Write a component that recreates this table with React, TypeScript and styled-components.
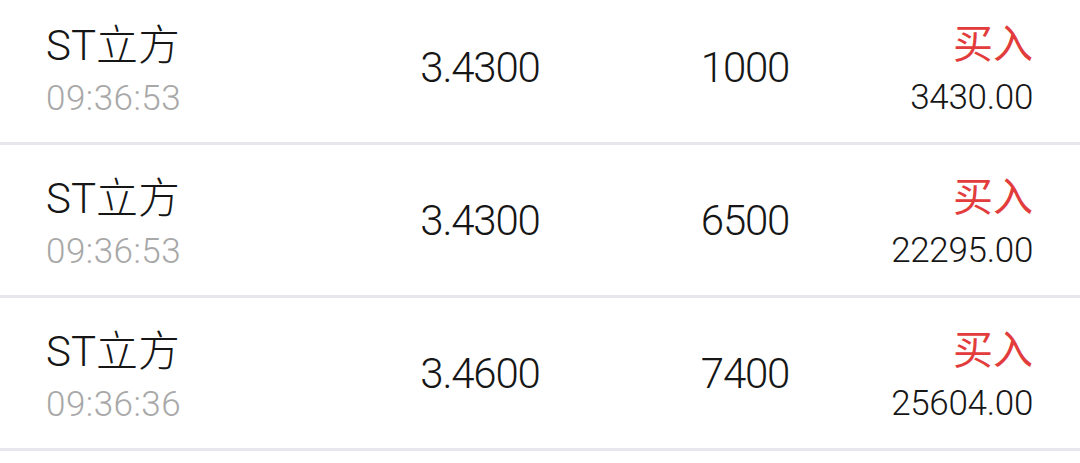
import React from "react";
import styled, { createGlobalStyle } from "styled-components";

const GlobalStyle = createGlobalStyle`
    html, body {
        margin: 0;
        padding: 0;
        background: #ffffff;
        overflow: hidden;
    }
    body {
        font-family: Roboto, "Noto Sans CJK SC", sans-serif;
    }
`;

const List = styled.div`
    width: 1080px;
    margin-top: -8px;
    background: #fff;
`;

const Row = styled.div`
    display: grid;
    grid-template-columns: 314px 240px 290px 1fr;
    align-items: center;
    height: 150px;
    padding: 0 47px 0 46px;
    border-bottom: 3px solid #e6e6ec;
`;

const NameCol = styled.div`
    display: flex;
    flex-direction: column;
    gap: 9px;
    margin-top: 6px;
`;

const Name = styled.div`
    font-size: 42px;
    font-weight: 300;
    line-height: 48px;
    color: #161616;
`;

const Time = styled.div`
    font-size: 35px;
    font-weight: 300;
    line-height: 40px;
    color: #a8a8a8;
    letter-spacing: 0.5px;
`;

const Cell = styled.div`
    text-align: center;
    font-size: 42px;
    font-weight: 300;
    color: #161616;
    letter-spacing: -1.2px;
`;

const TradeCol = styled.div`
    display: flex;
    flex-direction: column;
    align-items: flex-end;
    gap: 9px;
    margin-top: 4px;
`;

const Side = styled.div<{ $buy: boolean }>`
    font-size: 40px;
    line-height: 48px;
    color: ${(p) => (p.$buy ? "#e23c3c" : "#1f9d55")};
`;

const Amount = styled.div`
    font-size: 35px;
    font-weight: 300;
    line-height: 40px;
    color: #161616;
    letter-spacing: -0.3px;
`;

const trades = [
    { name: "ST立方", time: "09:36:53", price: "3.4300", qty: "1000", buy: true, amount: "3430.00" },
    { name: "ST立方", time: "09:36:53", price: "3.4300", qty: "6500", buy: true, amount: "22295.00" },
    { name: "ST立方", time: "09:36:36", price: "3.4600", qty: "7400", buy: true, amount: "25604.00" },
];

const App = () => {
    const rows = trades.map((t, i) => (
        <Row key={i}>
            <NameCol>
                <Name>{t.name}</Name>
                <Time>{t.time}</Time>
            </NameCol>
            <Cell>{t.price}</Cell>
            <Cell>{t.qty}</Cell>
            <TradeCol>
                <Side $buy={t.buy}>{t.buy ? "买入" : "卖出"}</Side>
                <Amount>{t.amount}</Amount>
            </TradeCol>
        </Row>
    ));
    return (
        <>
            <GlobalStyle />
            <List>{rows}</List>
        </>
    );
};

export default App;
